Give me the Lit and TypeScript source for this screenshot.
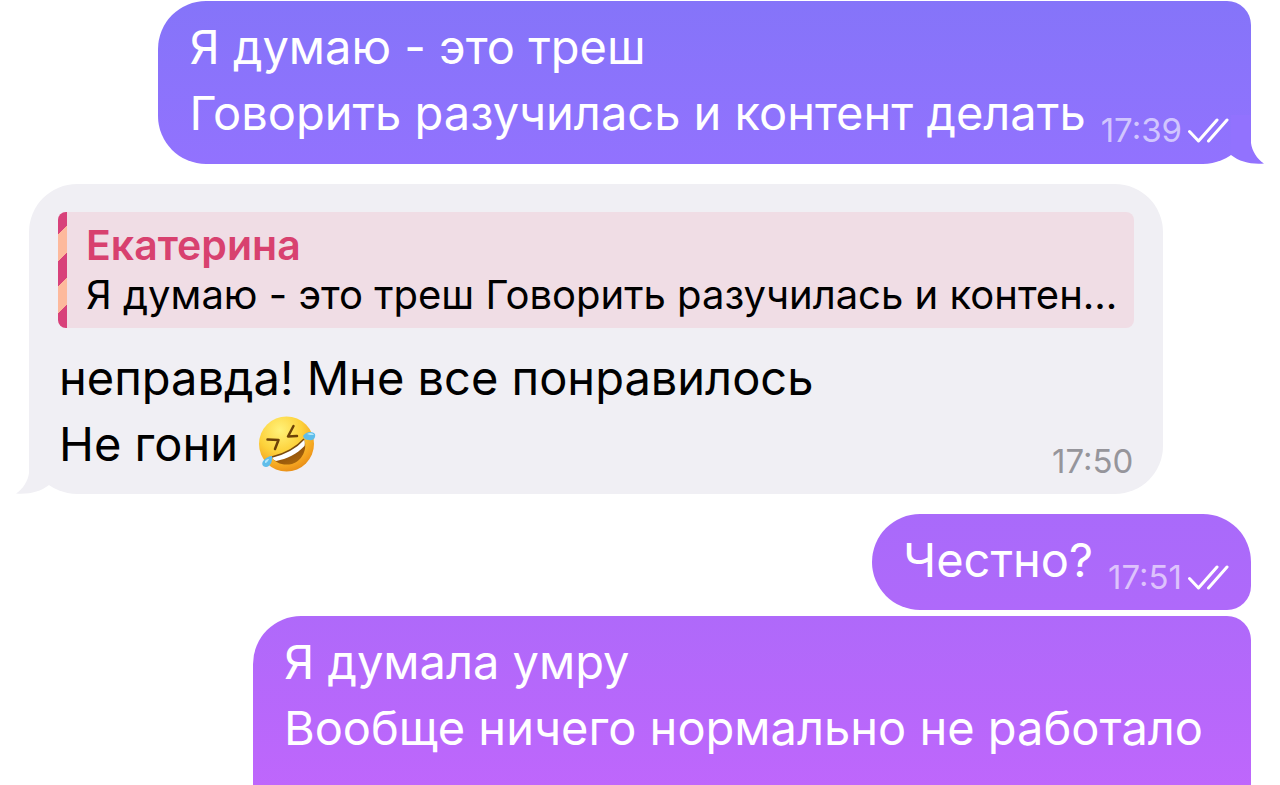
import { LitElement, html, css } from "lit";
import { customElement } from "lit/decorators.js";

const ticks = html`<svg class="ticks" viewBox="0 0 42 28" role="img" aria-label="Прочитано">
  <path d="M2.500 15.500L11.500 25L30 4M21.500 25L40 4" />
</svg>`;

const tail = html`<svg class="tail" viewBox="0 0 33 49" aria-hidden="true">
  <path d="M0 0H20V28C21 36 26 44 33 48.500C20 49.500 9 47 0 40Z" />
</svg>`;

const laughing = html`<svg class="emoji" viewBox="0 0 58 58" role="img" aria-label="🤣">
  <defs>
    <radialGradient id="face" cx="0.38" cy="0.25" r="0.8">
      <stop offset="0" stop-color="#fff27a" />
      <stop offset="0.5" stop-color="#fdd13a" />
      <stop offset="0.85" stop-color="#f3a01e" />
      <stop offset="1" stop-color="#e58a17" />
    </radialGradient>
    <linearGradient id="mouth" x1="0" y1="0" x2="0.6" y2="1">
      <stop offset="0" stop-color="#6b3408" />
      <stop offset="1" stop-color="#a9650c" />
    </linearGradient>
  </defs>
  <circle cx="28.500" cy="29" r="27.500" fill="url(#face)" />
  <path d="M14 42C26 39 38 33 46 24C50 34 44 46 34 49C25 51 17 48 14 42Z" fill="url(#mouth)" />
  <path d="M14 42C26 39 38 33 46 24C47 27 47 29 46.500 31C39 39 29 44 18 46C16 45 15 44 14 42Z" fill="#fff" />
  <path d="M14 42C26 39 38 33 46 24" fill="none" stroke="#7a4a0c" stroke-width="1.500" />
  <path d="M9.500 24.500L20.500 25L17 34M35.500 11L30 21.500L39 21" fill="none" stroke="#6d4107" stroke-width="2.500" stroke-linecap="round" stroke-linejoin="round" />
  <path d="M45 21C48 16 55 16 57 19C58 23 55 26 51 25C48 25 46 24 45 21Z" fill="#5fbdea" />
  <path d="M49 19C52 17 55 18 56 20C53 20 51 20 49 19Z" fill="#b4e8fb" />
  <path d="M14 41C15 46 12 52 8 52C4 52 3 48 6 45C8 43 11 41 14 41Z" fill="#5fbdea" />
  <path d="M7 46C9 44 10 44 11 44C10 46 9 48 7 48Z" fill="#b4e8fb" />
</svg>`;

@customElement("app-root")
export class AppRoot extends LitElement {
  static styles = css`
    :host { display: block; height: 100vh; overflow: hidden; background: #fff; font-family: Inter, "Liberation Sans", sans-serif; font-size: 47px; line-height: 66px; color: #000; }
    .chat { display: flex; flex-direction: column; padding: 1px 29px 0; }
    .msg { position: relative; box-sizing: border-box; white-space: nowrap; }
    .row { display: flex; align-items: flex-end; }
    .out { align-self: flex-end; color: #fff; }
    .first { padding: 13px 22px 18px 31px; border-radius: 48px 24px 48px 48px; background: linear-gradient(#8574f9, #9272fe); }
    .in { align-self: flex-start; max-width: 100%; margin-top: 20px; padding: 28px 29px 17px; border-radius: 48px; background: #f0eff4; }
    .short { margin-top: 20px; padding: 13px 22px 17px 31px; border-radius: 48px 48px 24px 48px; background: linear-gradient(#a96afa, #af69fa); }
    .last { margin-top: 6px; padding: 13px 48px 56px 31px; border-radius: 48px 24px 0 0; background: linear-gradient(#af69fa, #c166fc); }
    p { margin: 0; }
    .tail { position: absolute; right: -13px; bottom: 0; width: 33px; height: 49px; fill: #9272fe; }
    .in .tail { right: auto; left: -13px; fill: #f0eff4; transform: scaleX(-1); }
    .time { display: flex; align-items: center; gap: 5px; margin-left: 15px; font-size: 33px; line-height: 32px; color: #ffffff99; }
    .ticks { width: 42px; height: 28px; fill: none; stroke: #fff; stroke-width: 3; stroke-linecap: round; stroke-linejoin: round; }
    .body { padding: 0 1px; }
    .body .row { justify-content: space-between; }
    .body .time { color: #96959b; }
    .line { display: flex; align-items: center; gap: 20px; }
    .emoji { width: 58px; height: 58px; }
    .quote { display: flex; overflow: hidden; margin: 0 0 17px; border-radius: 8px; background: #f0dde5; }
    .stripe { flex: none; width: 9px; background: linear-gradient(135deg, #d8417a 16px, #fdb99c 16px 35px, #d8417a 35px 53px, #fdb99c 53px 72px, #d8417a 72px); }
    .cited { padding: 8px 17px 8px 19px; font-size: 40px; line-height: 50px; }
    .name { display: block; font-weight: 600; font-size: 41px; font-style: normal; color: #d8416f; }
  `;

  render() {
    return html`<main class="chat">
      <article class="msg out first">
        ${tail}
        <p>Я думаю - это треш</p>
        <div class="row"><p>Говорить разучилась и контент делать</p><span class="time"><time>17:39</time>${ticks}</span></div>
      </article>
      <article class="msg in">
        ${tail}
        <blockquote class="quote">
          <span class="stripe"></span>
          <div class="cited"><cite class="name">Екатерина</cite><p>Я думаю - это треш Говорить разучилась и контен...</p></div>
        </blockquote>
        <div class="body">
          <p>неправда! Мне все понравилось</p>
          <div class="row"><p class="line">Не гони ${laughing}</p><span class="time"><time>17:50</time></span></div>
        </div>
      </article>
      <article class="msg out short row"><p>Честно?</p><span class="time"><time>17:51</time>${ticks}</span></article>
      <article class="msg out last"><p>Я думала умру</p><p>Вообще ничего нормально не работало</p></article>
    </main>`;
  }
}
